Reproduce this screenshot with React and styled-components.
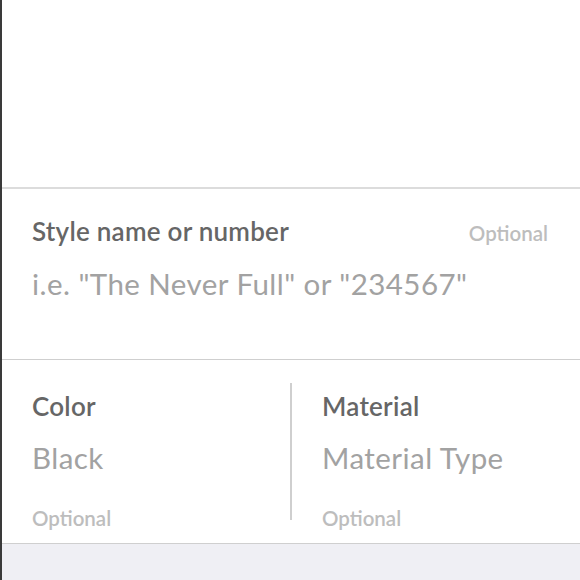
import React from "react";
import styled, { createGlobalStyle } from "styled-components";

const Global = createGlobalStyle`
  html, body { margin: 0; padding: 0; background: #ffffff; }
  body { font-family: Lato, "Open Sans", sans-serif; }
`;

const Screen = styled.div`
  width: 580px;
  height: 580px;
  box-sizing: border-box;
  border-left: 2px solid #3a3a3a;
  display: flex;
  flex-direction: column;
  overflow: hidden;
`;

const Blank = styled.div`
  height: 187px;
  flex: none;
  border-bottom: 2px solid #dcdcdc;
`;

const Section = styled.div`
  flex: none;
  height: ${(p) => p.$h}px;
  box-sizing: border-box;
  border-bottom: 1px solid #cfcfcf;
  display: grid;
  grid-template-columns: ${(p) => p.$cols || "1fr"};
`;

const Field = styled.div`
  box-sizing: border-box;
  padding: ${(p) => p.$pad};
  display: flex;
  flex-direction: column;
  min-width: 0;
`;

const HeadRow = styled.div`
  display: flex;
  justify-content: space-between;
  align-items: baseline;
`;

const Label = styled.div`
  font-size: 26px;
  font-weight: 600;
  color: #666666;
  line-height: 32px;
  letter-spacing: 0.25px;
`;

const Value = styled.div`
  font-size: 29.5px;
  font-weight: 400;
  color: #a2a2a2;
  line-height: 36px;
  letter-spacing: 0.45px;
  margin-top: ${(p) => p.$mt}px;
  white-space: nowrap;
`;

const Hint = styled.div`
  font-size: 20.5px;
  font-weight: 600;
  color: #bdbdbd;
  line-height: 24px;
  margin-top: ${(p) => p.$mt || 0}px;
`;

const Divider = styled.div`
  width: 2px;
  background: #cfcfcf;
  margin: 23px 0;
`;

const Footer = styled.div`
  flex: 1;
  background: #efeff4;
`;

export default function App() {
  return (
    <>
      <Global />
      <Screen>
        <Blank />
        <Section $h={171}>
          <Field $pad="26px 32px 0 30px">
            <HeadRow>
              <Label>Style name or number</Label>
              <Hint>Optional</Hint>
            </HeadRow>
            <Value $mt={19}>i.e. "The Never Full" or "234567"</Value>
          </Field>
        </Section>
        <Section $h={184} $cols="288px 2px 1fr">
          <Field $pad="30px 0 0 30px">
            <Label>Color</Label>
            <Value $mt={18}>Black</Value>
            <Hint $mt={30}>Optional</Hint>
          </Field>
          <Divider />
          <Field $pad="30px 0 0 30px">
            <Label>Material</Label>
            <Value $mt={18}>Material Type</Value>
            <Hint $mt={30}>Optional</Hint>
          </Field>
        </Section>
        <Footer />
      </Screen>
    </>
  );
}
